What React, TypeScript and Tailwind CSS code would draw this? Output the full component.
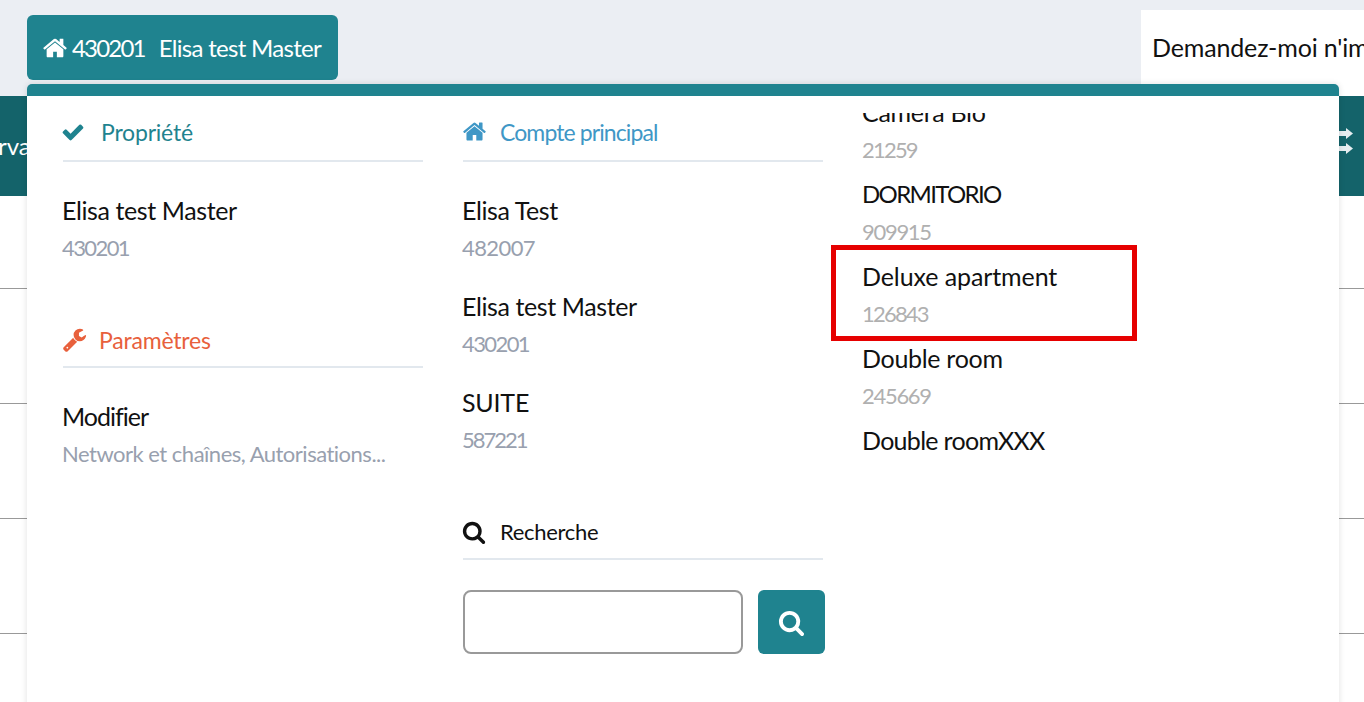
import React from 'react'

const font = { fontFamily: 'Lato, "Noto Sans", sans-serif' }

// Font Awesome 4 shapes, the icon packages only carry the newer drawings
const HomeIcon = ({ className }: { className?: string }) => (
  <svg viewBox="0 0 1792 1792" fill="currentColor" className={className}>
    <path d="M1472 992v480q0 26-19 45t-45 19h-384v-384h-256v384h-384q-26 0-45-19t-19-45v-480q0-1 .5-3t.5-3l575-474 575 474q1 2 1 6zm223-69l-62 74q-8 8-21 10h-3q-13 0-21-7l-692-577-692 577q-12 8-24 7-13-2-21-10l-62-74q-8-10-7-23.5t11-21.5l719-599q32-26 76-26t76 26l244 204v-195q0-14 9-23t23-9h192q14 0 23 9t9 23v408l219 182q10 8 11 21.5t-7 23.5z" />
  </svg>
)

const CheckIcon = ({ className }: { className?: string }) => (
  <svg viewBox="0 0 1792 1792" fill="currentColor" className={className}>
    <path d="M1671 566q0 40-28 68l-724 724-136 136q-28 28-68 28t-68-28l-136-136-362-362q-28-28-28-68t28-68l136-136q28-28 68-28t68 28l294 295 656-657q28-28 68-28t68 28l136 136q28 28 28 68z" />
  </svg>
)

const WrenchIcon = ({ className }: { className?: string }) => (
  <svg viewBox="0 0 1792 1792" fill="currentColor" className={className}>
    <path d="M448 1472q0-26-19-45t-45-19-45 19-19 45 19 45 45 19 45-19 19-45zm644-420l-682 682q-37 37-90 37-52 0-91-37l-106-108q-38-36-38-90 0-53 38-91l681-681q39 98 114.500 173.500t173.500 114.500zm634-435q0 39-23 106-47 134-164.500 217.500t-258.500 83.500q-185 0-316.500-131.500t-131.500-316.500 131.500-316.500 316.500-131.500q58 0 121.500 16.500t107.500 46.500q16 11 16 28t-16 28l-293 169v224l193 107q5-3 79-48.500t135.500-81 70.500-35.500q15 0 23.500 10t8.500 25z" />
  </svg>
)

const SearchIcon = ({ className }: { className?: string }) => (
  <svg viewBox="0 0 1792 1792" fill="currentColor" className={className}>
    <path d="M1216 832q0-185-131.500-316.500t-316.500-131.500-316.500 131.500-131.500 316.500 131.500 316.500 316.500 131.500 316.500-131.500 131.500-316.500zm512 832q0 52-38 90t-90 38q-54 0-90-38l-343-342q-179 124-399 124-143 0-273.500-55.500t-225-150-150-225-55.500-273.500 55.500-273.500 150-225 225-150 273.500-55.500 273.500 55.500 225 150 150 225 55.500 273.500q0 220-124 399l343 343q37 37 37 90z" />
  </svg>
)

const ArrowsIcon = ({ className }: { className?: string }) => (
  <svg viewBox="0 0 28 30" fill="currentColor" className={className}>
    <path d="M0 3h21V0l7 5.500-7 5.500V8H0z" />
    <path d="M0 18h21v-3l7 5.500-7 5.500v-3H0z" />
  </svg>
)

const Item = ({ name, code, codeClass = 'tracking-[-1.6px]', nameClass = 'tracking-[-0.4px]' }: { name: string; code: string; codeClass?: string; nameClass?: string }) => (
  <div className="-ml-[1px] h-[96px]">
    <div className={`text-[25px] leading-[32px] text-[#111111] ${nameClass}`}>{name}</div>
    <div className={`mt-[7px] text-[22px] leading-[30px] text-[#98a0ae] ${codeClass}`}>{code}</div>
  </div>
)

const RoomItem = ({ name, code, nameClass = 'text-[25px] tracking-[-0.3px]', codeClass = 'tracking-[-1.3px]' }: { name: string; code?: string; nameClass?: string; codeClass?: string }) => (
  <div className="h-[82px]">
    <div className={`leading-[32px] text-[#111111] ${nameClass}`}>{name}</div>
    {code && <div className={`mt-[7px] text-[22px] leading-[30px] text-[#b0b0b0] ${codeClass}`}>{code}</div>}
  </div>
)

const SectionTitle = ({ icon, title, className }: { icon: React.ReactNode; title: string; className: string }) => (
  <div className={`flex h-[61px] items-start border-b-2 border-[#e2e8ee] leading-[30px] ${className}`}>
    {icon}
    <span>{title}</span>
  </div>
)

export default function App() {
  return (
    <div className="relative h-[702px] w-[1364px] overflow-hidden bg-white" style={font}>
      <header className="flex h-[96px] items-start justify-between bg-[#ebeef3] pl-[27px]">
        <button className="mt-[15px] flex h-[65px] w-[311px] items-center rounded-[6px] bg-[#1f838f] pl-[15px] text-[24px] text-white">
          <HomeIcon className="mr-[4px] h-[26px] w-[26px]" />
          <span className="tracking-[-1.8px]">430201</span>
          <span className="ml-[14px] tracking-[-0.7px]">Elisa test Master</span>
        </button>
        <div className="mt-[10px] h-[86px] w-[223px] overflow-hidden bg-white pl-[11px] pt-[21px] text-[25px] leading-[32px] tracking-[-0.15px] whitespace-nowrap text-[#111111]">
          Demandez-moi n'importe quoi
        </div>
      </header>

      <nav className="flex h-[100px] items-center justify-between bg-[#14636a] text-[24px] text-white">
        <span className="-ml-[52px]">Réservations</span>
        <ArrowsIcon className="mr-[11px] h-[30px] w-[28px] -translate-y-[3px] text-[#e6edf0]" />
      </nav>

      <main>
        <div className="h-[93px] border-b border-[#999999]" />
        <div className="h-[115px] border-b border-[#999999]" />
        <div className="h-[115px] border-b border-[#999999]" />
        <div className="h-[115px] border-b border-[#999999]" />
      </main>

      {/* dropdown sits over the page */}
      <div className="absolute left-[27px] top-[84px] h-[640px] w-[1312px] rounded-t-[5px] border-t-[12px] border-[#1f838f] bg-white shadow-[0_0_6px_rgba(0,0,0,0.12)]">
        <div className="grid grid-cols-[360px_360px_360px] gap-x-[40px] px-[36px]">
          <div className="pt-[5px]">
            <SectionTitle
              icon={<CheckIcon className="-ml-[2px] mt-[3px] mr-[16px] h-[24px] w-[24px]" />}
              title="Propriété"
              className="pt-[16px] text-[23px] tracking-[-0.2px] text-[#1f838f]"
            />
            <div className="pt-[32px]">
              <Item name="Elisa test Master" code="430201" />
            </div>
            <div className="mt-[17px]">
              <SectionTitle
                icon={<WrenchIcon className="-ml-[1px] mt-[2px] mr-[12px] h-[25px] w-[25px]" />}
                title="Paramètres"
                className="pt-[18px] text-[23px] tracking-[-0.2px] text-[#e8603c]"
              />
            </div>
            <div className="pt-[32px]">
              <Item name="Modifier" code="Network et chaînes, Autorisations..." codeClass="tracking-[-0.5px]" nameClass="tracking-[-1px]" />
            </div>
          </div>

          <div className="pt-[5px]">
            <SectionTitle
              icon={<HomeIcon className="-ml-[1px] mt-[2px] mr-[13px] h-[25px] w-[25px]" />}
              title="Compte principal"
              className="pt-[16px] text-[23px] tracking-[-0.9px] text-[#3f97c6]"
            />
            <div className="pt-[32px]">
              <Item name="Elisa Test" code="482007" codeClass="tracking-[-0.6px]" />
              <Item name="Elisa test Master" code="430201" />
              <Item name="SUITE" code="587221" nameClass="tracking-[-0.2px]" codeClass="tracking-[-2px]" />
            </div>
            <div className="mt-[17px]">
              <SectionTitle
                icon={<SearchIcon className="-ml-[1px] mt-[3px] mr-[14px] h-[24px] w-[24px]" />}
                title="Recherche"
                className="pt-[18px] text-[22px] tracking-[-0.3px] text-[#111111]"
              />
            </div>
            <div className="mt-[30px] flex gap-[15px]">
              <div className="h-[64px] w-[280px] shrink-0 rounded-[8px] border-2 border-[#999999]" />
              <button className="flex h-[64px] w-[67px] shrink-0 items-center justify-center rounded-[6px] bg-[#1f838f] text-white">
                <SearchIcon className="h-[27px] w-[27px]" />
              </button>
            </div>
          </div>

          <div className="-ml-[1px] mt-[17px] h-[420px] overflow-hidden">
            <div className="-mt-[17px]">
              <RoomItem name="Camera Bio" code="21259" codeClass="tracking-[-1.8px]" />
              <RoomItem name="DORMITORIO" code="909915" nameClass="text-[24px] tracking-[-1.65px]" />
              <RoomItem name="Deluxe apartment" code="126843" nameClass="text-[25px] tracking-[-0.1px]" codeClass="tracking-[-1.8px]" />
              <RoomItem name="Double room" code="245669" />
              <RoomItem name="Double roomXXX" nameClass="text-[25px] tracking-[-0.7px]" />
            </div>
          </div>
        </div>
      </div>

      {/* red annotation box */}
      <div className="absolute left-[831px] top-[245px] h-[96px] w-[306px] border-[5px] border-[#e60000]" />
    </div>
  )
}
